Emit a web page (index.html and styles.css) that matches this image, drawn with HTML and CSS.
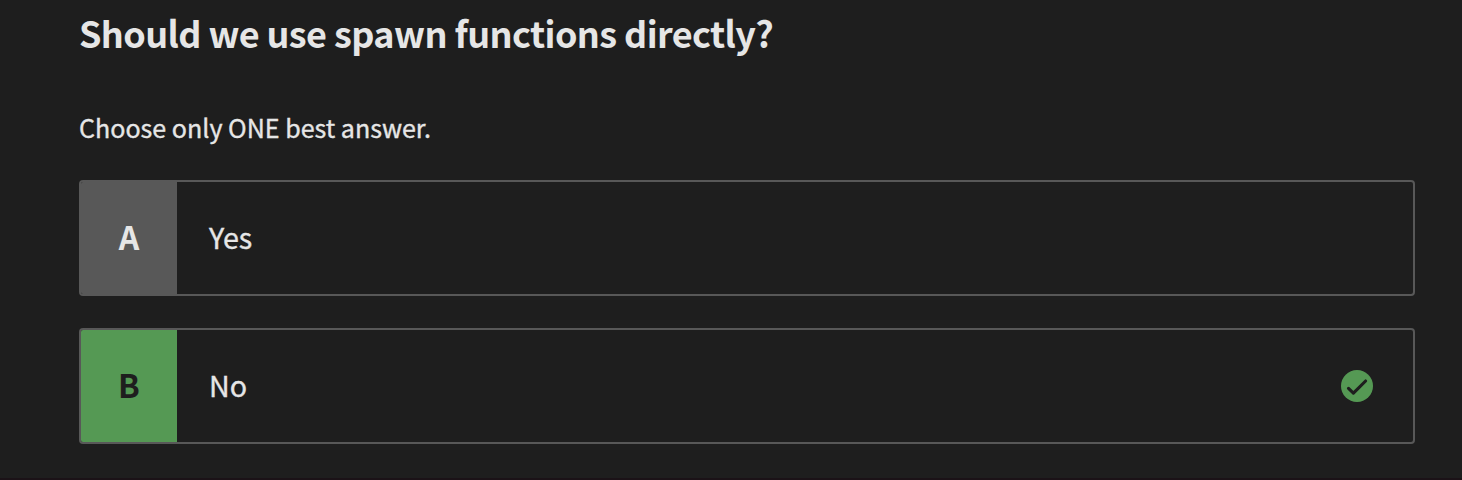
FILE: index.html
```html
<!DOCTYPE html>
<html lang="en">
<head>
<meta charset="utf-8">
<title>Quiz</title>
<link rel="stylesheet" href="styles.css">
</head>
<body>
<main class="quiz">
  <h1 class="question">Should we use spawn functions directly?</h1>
  <p class="hint">Choose only ONE best answer.</p>
  <div class="answers">
    <div class="answer">
      <span class="letter">A</span>
      <span class="label">Yes</span>
    </div>
    <div class="answer correct">
      <span class="letter">B</span>
      <span class="label">No</span>
      <svg class="check" viewBox="0 0 32 32" width="32" height="32" aria-hidden="true">
        <circle cx="16" cy="16" r="16" fill="#559954"/>
        <path d="M7.5 18.3 12.4 23.2 24.6 11" fill="none" stroke="#1e1e1e" stroke-width="3.1" stroke-linecap="round" stroke-linejoin="round"/>
      </svg>
    </div>
  </div>
</main>
</body>
</html>
```
FILE: styles.css
```css
* { box-sizing: border-box; }
body {
  margin: 0;
  background: #1e1e1e;
  color: #e6e6e6;
  font-family: "Noto Sans CJK SC", "Noto Sans", sans-serif;
}
.quiz {
  height: 480px;
  padding: 2px 47px 0 79px;
  border-bottom: 2px solid #1b1217;
}
.question {
  margin: 0;
  font-size: 36px;
  font-weight: 700;
  line-height: 60px;
  letter-spacing: -0.6px;
}
.hint {
  margin: 45px 0 0;
  font-size: 25.07px;
  line-height: 40px;
  -webkit-text-stroke: 0.35px currentColor;
}
.answers {
  display: flex;
  flex-direction: column;
  gap: 32px;
  margin-top: 33px;
}
.answer {
  display: flex;
  align-items: center;
  height: 116px;
  border: 2px solid #585858;
  border-radius: 4px;
  overflow: hidden;
}
.letter {
  align-self: stretch;
  width: 96px;
  padding-bottom: 4px;
  background: #585858;
  font-size: 32px;
  font-weight: 700;
  line-height: 108px;
  text-align: center;
}
.correct .letter {
  background: #559954;
  color: #1e1e1e;
}
.label {
  flex: 1;
  padding: 0 0 2px 32px;
  font-size: 28.65px;
  line-height: 40px;
  -webkit-text-stroke: 0.35px currentColor;
}
.check { margin-right: 40px; }
```
